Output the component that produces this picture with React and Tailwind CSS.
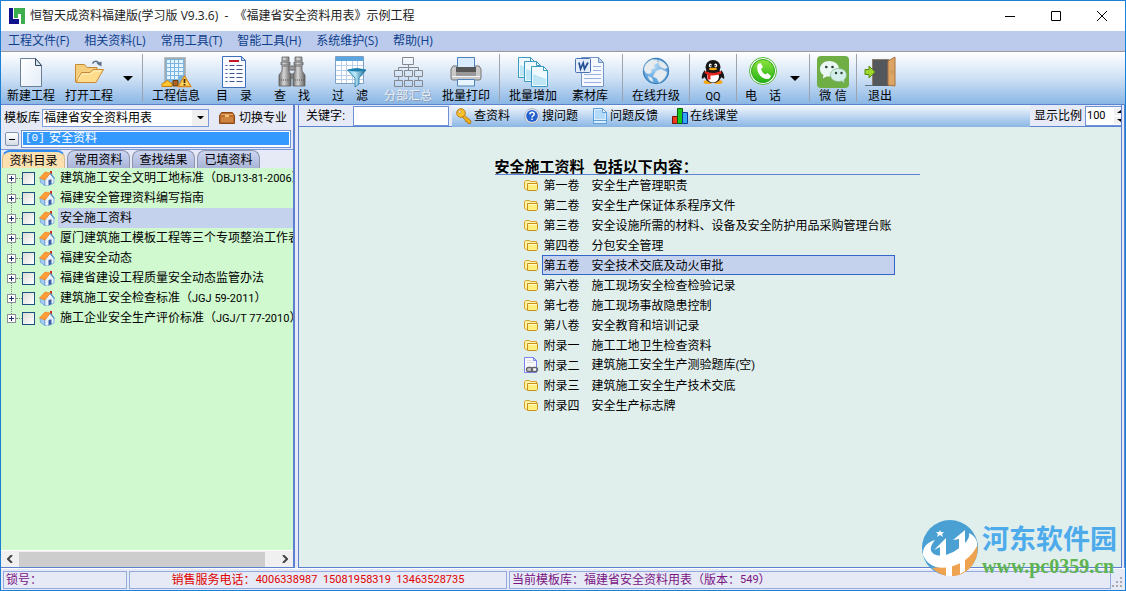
import React from "react";

const UI = "font-['Open_Sans','Noto_Sans_CJK_SC',sans-serif]";
const CJK = "font-['Liberation_Sans','Noto_Sans_CJK_SC',sans-serif]";

/* Sets the Latin runs of a mixed string at about half the width of a Chinese character. */
function Mixed({ children }) {
  return children.split(/([\x20-\x7e]+)/).map((part, i) =>
    i % 2 ? (
      <span key={i} className="font-['Roboto',sans-serif] text-[11px] whitespace-pre">{part}</span>
    ) : (
      part
    )
  );
}

const Svg = ({ children, size = "size-8", box = "0 0 32 32" }) => (
  <svg viewBox={box} className={`${size} shrink-0`} aria-hidden="true">{children}</svg>
);

const NewIcon = () => (
  <Svg>
    <defs><linearGradient id="pg" x1="0" y1="0" x2="1" y2="1"><stop stopColor="#fff" /><stop offset="1" stopColor="#e3ecf8" /></linearGradient></defs>
    <path d="M5.500 2.500h15l6 7v21h-21z" fill="url(#pg)" stroke="#6c7f94" />
    <path d="M20.500 2.500l6 7h-6z" fill="#dbe6f1" stroke="#34495e" />
  </Svg>
);
const OpenIcon = () => (
  <Svg>
    <path d="M2.500 26V8.500h9l2.500 3h10v5" fill="#f6cf7c" stroke="#c68a35" />
    <path d="M3 26.500L8.500 16.500H17l3-3h10.500L23 26.500z" fill="#ffdc8b" stroke="#c68a35" />
    <path d="M5 24l4-6h9l3-3h7" fill="none" stroke="#fff1c2" />
    <path d="M19.500 7.500c2-3.500 5.500-3 7 1.500" fill="none" stroke="#5d7186" strokeWidth="1.600" />
    <path d="M23.500 7.500l5 3V5.500z" fill="#5d7186" />
  </Svg>
);
const InfoIcon = () => (
  <Svg>
    <path d="M5 2h20v27H5z" fill="#7db4de" stroke="#a8a9ab" strokeWidth="1.500" />
    <path d="M7 4h3v3H7zm4 0h3v3h-3zm4 0h3v3h-3zm4 0h4v3h-4zM7 8h3v3H7zm4 0h3v3h-3zm4 0h3v3h-3zm4 0h4v3h-4zM7 12h3v3H7zm4 0h3v3h-3zm4 0h3v3h-3zm4 0h4v3h-4zM7 16h3v3H7zm4 0h3v3h-3zm4 0h3v3h-3zm4 0h4v3h-4zM7 20h3v3H7zm4 0h3v3h-3zm4 0h3v3h-3z" fill="#e2f5ff" />
    <path d="M2 30.500q-1-4 3-4 2-4 5 0 3 0 2 4z" fill="#ffc42e" stroke="#c77e10" />
    <path d="M13 24.500h5V30h-5z" fill="#a96421" stroke="#6f3c0c" />
    <path d="M24.500 20l6.500 10.500H18z" fill="#ffd45c" stroke="#d9891b" strokeWidth="1.300" strokeLinejoin="round" />
    <path d="M24.500 23v4m0 1v1.500" stroke="#3d2a10" strokeWidth="1.800" />
  </Svg>
);
const CatalogIcon = () => (
  <Svg>
    <path d="M4.500.5h19l4 4v27h-23z" fill="#f9fbff" stroke="#3e6fb8" />
    <path d="M23.500.5v4h4z" fill="#c6dcf4" stroke="#3e6fb8" />
    <path d="M11 4h10v2H11z" fill="#c4182c" />
    <path d="M7.500 9.500h2m2 0h5m2 0h6M7.500 13.500h2m2 0h5m2 0h6M7.500 17.500h2m2 0h5m2 0h6M7.500 21.500h2m2 0h5m2 0h6M7.500 25.500h2m2 0h5m2 0h6" stroke="#3d568f" />
  </Svg>
);
const FindIcon = () => (
  <Svg>
    <defs><linearGradient id="bn"><stop stopColor="#6a6a6a" /><stop offset=".4" stopColor="#d6d6d6" /><stop offset="1" stopColor="#606060" /></linearGradient></defs>
    <path d="M12 10h8v4h-8zM13 18h6v4h-6z" fill="#9b9b9b" stroke="#666" />
    <path d="M6 1h7v4H6zM5 6h9v3H5zM6 10h7v5l2 4v11H3V19l3-4z" fill="url(#bn)" stroke="#606060" strokeWidth=".8" />
    <path d="M19 1h7v4h-7zM18 6h9v3h-9zM19 10h7v5l3 4v11H17V19l2-4z" fill="url(#bn)" stroke="#606060" strokeWidth=".8" />
    <path d="M3 24h12M17 24h12" stroke="#555" strokeDasharray="1 1" />
  </Svg>
);
const FilterIcon = () => (
  <Svg>
    <defs><linearGradient id="fn"><stop stopColor="#74c2e6" /><stop offset=".4" stopColor="#bfe9f8" /><stop offset="1" stopColor="#0a5f90" /></linearGradient></defs>
    <path d="M1.500.5h28v27h-28z" fill="#fff" stroke="#7ea0c6" />
    <path d="M2 1h27v4H2z" fill="#5ba4de" />
    <path d="M2 9.500h27M2 14.500h27M2 19.500h27M2 23.500h27M7.500 5v22M12.500 5v22M18.500 5v22M23.500 5v22" stroke="#b8d0ea" />
    <path d="M13.500 14q9.500-3 18.500 0l-7 8v6l-4 3v-9z" fill="url(#fn)" stroke="#1675a5" strokeWidth=".8" />
    <ellipse cx="22.700" cy="14" rx="8.500" ry="1.500" fill="#1b80b0" />
  </Svg>
);
const OrgIcon = () => (
  <Svg>
    <path d="M10.500 1.500h11v7h-11zM2.500 14.500h8v6h-8zM12.500 14.500h8v6h-8zM22.500 14.500h8v6h-8zM2.500 24.500h8v6h-8zM12.500 24.500h8v6h-8zM22.500 24.500h8v6h-8zM16.500 9v5M6.500 14v-2.500h20V14M6.500 21v3M16.500 21v3M26.500 21v3" fill="none" stroke="#84888f" />
  </Svg>
);
const PrintIcon = () => (
  <Svg>
    <path d="M3 10h26l2 3v9q0 2-2 2H3q-2 0-2-2v-9z" fill="#c9c9c9" stroke="#777" />
    <path d="M7.500 1.500h17V12h-17z" fill="#d9ecff" stroke="#4e83b9" />
    <path d="M6 11h20v5H6z" fill="#565656" /><path d="M6 16h20v4H6z" fill="#999" />
    <path d="M2 20.500h28" stroke="#f4f4f4" />
    <path d="M7.500 23.500h17V30h-17z" fill="#e8f5ff" stroke="#4e83b9" />
  </Svg>
);
const BatchIcon = () => (
  <Svg>
    {[[1, 1], [7, 5], [14, 10]].map(([x, y]) => (
      <g key={x} transform={`translate(${x} ${y})`}>
        <path d="M.5.5h12l4 4V20.500H.5z" fill="#eefaff" stroke="#3a9cc3" />
        <path d="M2 8l13 5v6H2z" fill="#bfe6f5" /><path d="M12.500.5v4h4z" fill="#fff" stroke="#3a9cc3" />
      </g>
    ))}
  </Svg>
);
const WordIcon = () => (
  <Svg>
    <path d="M7.500 1.500h17l5 5v24h-22z" fill="#f5f9ff" stroke="#7294c4" />
    <path d="M24.500 1.500v5h5z" fill="#b9cfee" stroke="#7294c4" />
    <path d="M19 10.500h8M19 14.500h8M10 18.500h17M10 22.500h17M10 26.500h17" stroke="#9ab2d6" />
    <rect x="1.500" y="2.500" width="15" height="14" rx="1" fill="#e4eefb" stroke="#4771b0" />
    <path d="M5 6.500l1.500 6.500 2.700-6 1.300 6L14 6.500" fill="none" stroke="#244f96" strokeWidth="1.700" />
  </Svg>
);
const GlobeIcon = () => (
  <Svg>
    <defs><radialGradient id="gl" cx=".4" cy=".3"><stop stopColor="#b5defa" /><stop offset="1" stopColor="#5fa6e0" /></radialGradient></defs>
    <circle cx="16" cy="15" r="12.500" fill="url(#gl)" stroke="#3c81be" strokeWidth="1.300" />
    <path d="M4 14q0-7 8-10.500l5 .5 1 3-4 2 1 3-4 2 1 2-3 2-3-1zM19 4.500q6 1.500 8.500 7l-3 1.500-4-2-2-3zM16 15l5-2 6 3q-1 7-8 10.500l-2-4-4-2zM8 20l4 2 1 4q-4-1-5-6z" fill="#e6ebef" stroke="#c6d3de" strokeWidth=".5" />
  </Svg>
);
const QQIcon = () => (
  <Svg>
    <ellipse cx="11" cy="26" rx="4.500" ry="2" fill="#f7a614" /><ellipse cx="21" cy="26" rx="4.500" ry="2" fill="#f7a614" />
    <path d="M8 14q-4 4-3 9l3-2M24 14q4 4 3 9l-3-2" fill="#161616" />
    <ellipse cx="16" cy="19.500" rx="8.500" ry="7.500" fill="#161616" /><ellipse cx="16" cy="20.500" rx="6" ry="6" fill="#fff" />
    <ellipse cx="16" cy="11" rx="7.500" ry="7" fill="#161616" />
    <ellipse cx="13.300" cy="9.500" rx="1.500" ry="2" fill="#fff" /><ellipse cx="18.700" cy="9.500" rx="1.500" ry="2" fill="#fff" />
    <circle cx="14" cy="9.700" r=".8" /><circle cx="18" cy="9.700" r=".8" />
    <ellipse cx="16" cy="13" rx="4" ry="1.200" fill="#f7a614" />
    <path d="M8 15q8 4 16 0l.5 2.500q-5 2.500-11 2v4h-3v-5l-3-1.500z" fill="#e3231c" />
  </Svg>
);
const PhoneIcon = () => (
  <Svg>
    <defs><linearGradient id="ph" x2="0" y2="1"><stop stopColor="#8ee33e" /><stop offset="1" stopColor="#22b314" /></linearGradient></defs>
    <circle cx="16" cy="15" r="13.500" fill="#fff" stroke="#52ba35" />
    <circle cx="16" cy="15" r="11.500" fill="url(#ph)" stroke="#2ea51c" />
    <path d="M11 8l2.500-1 2.500 4-2 2q1 4 4.500 5.500l2-1.500 3.500 3-1.500 2.500q-5 2-9.500-3-4.500-6-2-11.500z" fill="#fff" />
  </Svg>
);
const WechatIcon = () => (
  <Svg>
    <rect width="32" height="32" rx="4" fill="#6fae45" />
    <path d="M12.500 5C7 5 3 8.500 3 13q0 4 3.500 6l-.8 3.500 4-2Q22 21.500 22 13q-.5-7.500-9.500-8z" fill="#eaf7f4" />
    <path d="M21.500 12.500c-4.700 0-8 2.800-8 6.500s3.400 6.500 8 6.500q1.500 0 3-.5l3 2-.6-3q2.600-2 2.600-5c0-3.700-3.300-6.500-8-6.500z" fill="#d4efeb" stroke="#83ba87" strokeWidth=".8" />
    <g fill="#263c30"><circle cx="9.300" cy="11" r="1.300" /><circle cx="15.500" cy="11" r="1.300" /><circle cx="19" cy="17" r="1.200" /><circle cx="24.500" cy="17" r="1.200" /></g>
  </Svg>
);
const ExitIcon = () => (
  <Svg>
    <path d="M8 3h17v27H8z" fill="#8d7b68" /><path d="M9 4h16v26H9z" fill="#54575b" />
    <path d="M24 5l7-4v29l-7-1z" fill="#dca566" stroke="#a8733c" /><circle cx="28" cy="16" r="1.300" fill="#ffdf82" stroke="#805020" strokeWidth=".5" />
    <path d="M1 13.500h4V10l6 6-6 6v-3.500H1z" fill="#a0d52c" stroke="#548d10" /><path d="M1 29.500h8" stroke="#64727e" />
  </Svg>
);

const HouseIcon = () => (
  <Svg size="size-4" box="0 0 16 16">
    <path d="M1 7.500l5 2.500v5.500L1.500 12.500z" fill="#a5cdf2" stroke="#5b95d2" strokeWidth=".7" />
    <path d="M6 9.500L11 3.500l4 5v4.500l-6.500 3L6 15.500z" fill="#e9f2fc" stroke="#6b9fd8" strokeWidth=".7" />
    <path d="M9.500 10l3-.8v5l-3 1z" fill="#3f62a8" />
    <path d="M11 1h2v4.500l-2-2z" fill="#d52d17" />
    <path d="M.5 8L6 2l5.500 1L6 10z" fill="#ff9c35" stroke="#ee7f1e" strokeWidth=".6" />
    <path d="M11.200 3l4.300 5.500" stroke="#4d86c8" strokeWidth="1.200" />
  </Svg>
);
const FolderIcon = () => (
  <Svg size="w-3.5 h-3" box="0 0 14 12">
    <path d="M.5 9.500v-7l1-1h4l1 1h6v8h-10z" fill="#fff3a3" stroke="#d9a02c" />
    <path d="M3.500 4.500h10v6l-1 1h-9z" fill="#ffef80" stroke="#c8921e" />
    <path d="M4 5.500h9" stroke="#fffbc8" />
  </Svg>
);
const LinkedDocIcon = () => (
  <Svg size="size-4" box="0 0 16 16">
    <path d="M1.500.5h9l3 3v12h-12z" fill="#f8f9ff" stroke="#7d83ee" /><path d="M10.500.5v3h3z" fill="#cfd3fb" stroke="#7d83ee" />
    <path d="M4 3.500h5M4 5.500h7" stroke="#ddd" />
    <rect x="3.500" y="10.500" width="6" height="4" rx="2" fill="#ccc" stroke="#666" strokeWidth="1.300" /><rect x="8.500" y="10.500" width="6" height="4" rx="2" fill="none" stroke="#666" strokeWidth="1.300" />
  </Svg>
);
const KeyIcon = () => (
  <Svg size="size-4" box="0 0 16 16">
    <path d="M7 6l8 7-.5 2.500H12l-1-2H9.500L9 11.500 5 8z" fill="#f0b31c" stroke="#a86b08" strokeWidth=".8" />
    <circle cx="5" cy="5" r="4.300" fill="#f8c22e" stroke="#b37509" strokeWidth=".9" /><circle cx="3.800" cy="3.800" r="1.200" fill="#fff" stroke="#a86b08" strokeWidth=".5" />
  </Svg>
);
const HelpIcon = () => (
  <Svg size="size-4" box="0 0 16 16">
    <circle cx="8" cy="8" r="7.300" fill="#f3f6fa" stroke="#9aa5b4" strokeWidth=".8" /><circle cx="8" cy="8" r="5.900" fill="#2560cc" />
    <path d="M5.800 6.400Q6 4.300 8.100 4.300q2 0 2.100 1.800 0 1.200-1.200 1.800Q8 8.400 8 9.500m0 1v1.600" fill="none" stroke="#fff" strokeWidth="1.500" />
  </Svg>
);
const NoteIcon = () => (
  <Svg size="size-4" box="0 0 16 16">
    <path d="M1.500.5h9l4 4v11h-13z" fill="#dceeff" stroke="#5ba0dc" /><path d="M3 2h7v3h3v6H3z" fill="#b4daf9" /><path d="M10.500.5v4h4z" fill="#fff" stroke="#5ba0dc" /><path d="M1.500 12.500h13" stroke="#5ba0dc" />
  </Svg>
);
const BarsIcon = () => (
  <Svg size="size-4" box="0 0 16 16">
    <path d="M.5 8.500h5v7h-5z" fill="#f23a1d" stroke="#7b0f05" /><path d="M5.500.5h5v15h-5z" fill="#18c91c" stroke="#075c0a" /><path d="M10.500 4.500h5v11h-5z" fill="#31a8f4" stroke="#08369a" />
  </Svg>
);
const ChestIcon = () => (
  <Svg size="size-4" box="0 0 16 16">
    <path d="M.5 5.500l2-3h11l2 3v8H.5z" fill="#b8692c" stroke="#8a4a1a" /><path d="M2 4.500h12" stroke="#e9a767" /><path d="M2 7h12v5H2z" fill="#cd8441" /><path d="M6 5h4v2H6z" fill="#f2c179" />
  </Svg>
);
const Caret = ({ className = "w-2.5" }) => (
  <svg viewBox="0 0 10 5" className={className} aria-hidden="true"><path d="M0 0h10L5 5z" fill="#000" /></svg>
);

const wide = "w-[58px]";
const narrow = "w-[38px]";
const tools = [
  { label: "新建工程", icon: NewIcon, w: wide },
  { label: "打开工程", icon: OpenIcon, w: wide, menu: true },
  null,
  { label: "工程信息", icon: InfoIcon, w: wide },
  { label: "目　录", icon: CatalogIcon, w: wide },
  { label: "查　找", icon: FindIcon, w: wide },
  { label: "过　滤", icon: FilterIcon, w: wide },
  { label: "分部汇总", icon: OrgIcon, w: wide, disabled: true },
  { label: "批量打印", icon: PrintIcon, w: wide },
  null,
  { label: "批量增加", icon: BatchIcon, w: wide },
  { label: "素材库", icon: WordIcon, w: "w-14" },
  null,
  { label: "在线升级", icon: GlobeIcon, w: wide },
  null,
  { label: "QQ", icon: QQIcon, w: narrow },
  null,
  { label: "电　话", icon: PhoneIcon, w: "w-11", menu: true },
  null,
  { label: "微 信", icon: WechatIcon, w: narrow },
  null,
  { label: "退出", icon: ExitIcon, w: narrow },
];

const tree = [
  "建筑施工安全文明工地标准（DBJ13-81-2006）",
  "福建安全管理资料编写指南",
  "安全施工资料",
  "厦门建筑施工模板工程等三个专项整治工作表",
  "福建安全动态",
  "福建省建设工程质量安全动态监管办法",
  "建筑施工安全检查标准（JGJ 59-2011）",
  "施工企业安全生产评价标准（JGJ/T 77-2010）",
];

const volumes = [
  ["第一卷", "安全生产管理职责"],
  ["第二卷", "安全生产保证体系程序文件"],
  ["第三卷", "安全设施所需的材料、设备及安全防护用品采购管理台账"],
  ["第四卷", "分包安全管理"],
  ["第五卷", "安全技术交底及动火审批"],
  ["第六卷", "施工现场安全检查检验记录"],
  ["第七卷", "施工现场事故隐患控制"],
  ["第八卷", "安全教育和培训记录"],
  ["附录一", "施工工地卫生检查资料"],
  ["附录二", "建筑施工安全生产测验题库(空)"],
  ["附录三", "建筑施工安全生产技术交底"],
  ["附录四", "安全生产标志牌"],
];

function TitleBar() {
  return (
    <header className={`flex h-[30px] shrink-0 items-center bg-white pl-2 ${UI}`}>
      <svg viewBox="0 0 16 16" className="size-4" aria-hidden="true">
        <path d="M0 0h4v11h6v5H0z" fill="#11118c" /><path d="M5 0h11v16h-4V6H9v4H5z" fill="#3cae4d" />
      </svg>
      <h1 className="ml-[5px] text-[12px] whitespace-pre text-[#222]">恒智天成资料福建版(学习版 V9.3.6)  -  《福建省安全资料用表》示例工程</h1>
      <div className="ml-auto flex">
        {[["最小化", "M0 5.500h10"], ["最大化", "M.5.5h9v9h-9z"], ["关闭", "M0 0l10 10M10 0L0 10"]].map(([name, d]) => (
          <button key={name} aria-label={name} className="flex h-[30px] w-[46px] items-center justify-center">
            <svg viewBox="0 0 10 10" className="size-2.5"><path d={d} fill="none" stroke="#000" /></svg>
          </button>
        ))}
      </div>
    </header>
  );
}

function Toolbar() {
  return (
    <div role="toolbar" className="flex h-[53px] shrink-0 border-t border-[#999] bg-linear-to-b from-white via-[#cfe1f5] to-[#8ab6e5] pl-px">
      {tools.map((t, i) => {
        if (!t) return <div key={i} className="mx-1 my-0.5 w-px shrink-0 bg-[#9da4ad]" />;
        const Icon = t.icon;
        return (
          <div key={t.label} className="flex shrink-0">
            <button disabled={t.disabled} className={`flex flex-col items-center gap-px pt-1 ${t.w}`}>
              <Icon />
              <span className={`text-[12px] leading-[14px] whitespace-nowrap ${t.disabled ? "text-[#e9edf3] [text-shadow:1px_1px_0_#8da3bd]" : "text-black"}`}>
                {t.label === "QQ" ? <Mixed>QQ</Mixed> : t.label}
              </span>
            </button>
            {t.menu && <button aria-label={`${t.label}菜单`} className="flex w-5 items-center justify-center"><Caret /></button>}
          </div>
        );
      })}
    </div>
  );
}

function LeftPanel() {
  return (
    <aside className="flex w-[294px] shrink-0 flex-col border-r-2 border-b border-[#5c7fd0] bg-[#e6eaf6]">
      <div className="flex h-6 shrink-0 items-center pt-px pl-[3px]">
        <label htmlFor="library" className="w-[38px] whitespace-nowrap">模板库</label>
        <div className="relative">
          <select id="library" className="block h-[18px] w-[167px] appearance-none border border-[#7b9ad8] bg-white pl-px text-[12px] leading-4">
            <option>福建省安全资料用表</option>
          </select>
          <span className="pointer-events-none absolute inset-y-px right-px flex w-4 items-center justify-center bg-[#f0f0f0]"><Caret className="w-[7px]" /></span>
        </div>
        <button className="ml-2.5 flex items-center gap-1 whitespace-nowrap"><ChestIcon />切换专业</button>
      </div>
      <div className="flex h-5 shrink-0 items-center gap-0.5 pr-0.5 pl-1">
        <button aria-label="折叠" className="flex size-3.5 items-center justify-center rounded-xs border border-[#7f93b3] bg-linear-to-b from-white to-[#d6dbe6]">
          <span className="h-px w-1.5 bg-black" />
        </button>
        <button className="flex h-[18px] flex-1 items-start border border-[#6d92d6] bg-white p-px text-left">
          <span className="flex h-[13px] w-full bg-[#3399ff] pl-0.5 leading-[13px] text-white">
            <span className="w-6 font-['Liberation_Mono',monospace] text-[11px]">[0]</span>
            <span>安全资料</span>
          </span>
        </button>
      </div>
      <div role="tablist" className="flex h-[19px] shrink-0 items-end gap-0.5 overflow-hidden border-t border-[#7b95d2] pl-px">
        {["资料目录", "常用资料", "查找结果", "已填资料"].map((name, i) => (
          <button
            key={name}
            role="tab"
            aria-selected={i === 0}
            className={`h-[18px] w-[63px] rounded-t-lg border-x text-[12px] leading-[18px] whitespace-nowrap ${
              i === 0 ? "border-t-2 border-x-[#d9b98a] border-t-[#2f8cf0] bg-[#fde0b0]" : "border-t border-[#8d95ab] bg-linear-to-b from-[#ccd6f2] to-[#a9b3d6]"
            }`}
          >
            {name}
          </button>
        ))}
      </div>
      <div className="min-h-0 flex-1 overflow-hidden bg-[#d0f9cf]">
        <ul className="relative before:absolute before:top-2.5 before:bottom-2.5 before:left-2.5 before:border-l before:border-dotted before:border-[#888]">
          {tree.map((name, i) => (
            <li key={name} className="relative flex h-5 items-center pl-1.5">
              <button aria-label={`展开${name}`} className="flex size-[9px] items-center justify-center border border-[#8a8f9a] bg-white">
                <svg viewBox="0 0 5 5" className="size-[5px]"><path d="M0 2.500h5M2.500 0v5" stroke="#1b2c6b" /></svg>
              </button>
              <span className="w-1.5 border-t border-dotted border-[#888]" />
              <input id={`node-${i}`} type="checkbox" className="size-[13px] shrink-0 appearance-none border border-[#1d5280] bg-linear-to-br from-[#dcdcd7] to-white checked:bg-[#3399ff]" />
              <label htmlFor={`node-${i}`} className="flex h-5 min-w-0 flex-1 items-center gap-[3px] pl-1">
                <HouseIcon />
                <span className={`h-5 flex-1 overflow-hidden pl-0.5 leading-5 whitespace-nowrap ${i === 2 ? "bg-[#c5d2ee]" : ""}`}><Mixed>{name}</Mixed></span>
              </label>
            </li>
          ))}
        </ul>
      </div>
      <div className="flex h-[17px] shrink-0 items-center border-t border-white bg-[#f0f0f0]">
        <button aria-label="向左滚动" className="flex w-[18px] justify-center"><svg viewBox="0 0 6 8" className="h-2 w-1.5"><path d="M5 0L1 4l4 4" fill="none" stroke="#444" strokeWidth="2" /></svg></button>
        <div className="h-[15px] flex-1 pr-3"><div className="h-full bg-[#cdcdcd]" /></div>
        <button aria-label="向右滚动" className="flex w-4 justify-center"><svg viewBox="0 0 6 8" className="h-2 w-1.5"><path d="M1 0l4 4-4 4" fill="none" stroke="#444" strokeWidth="2" /></svg></button>
      </div>
    </aside>
  );
}

function SearchBar() {
  const actions = [["查资料", KeyIcon], ["搜问题", HelpIcon], ["问题反馈", NoteIcon], ["在线课堂", BarsIcon]];
  return (
    <div className="flex h-[22px] shrink-0 items-stretch">
      <div className="flex w-[153px] shrink-0 items-center border-b border-[#5c83d0] bg-[#e6eaf6] pl-[7px]">
        <label htmlFor="keyword" className="w-[47px] whitespace-nowrap">关键字:</label>
        <input id="keyword" className="h-5 w-24 border border-[#6d92d6] bg-white px-1 text-[12px] outline-none" />
      </div>
      <div className="flex min-w-0 flex-1 items-center gap-3.5 overflow-hidden bg-linear-to-b from-[#f4f8fd] to-[#8ab6e5] pl-1">
        {actions.map(([name, Icon]) => (
          <button key={name} className="flex shrink-0 items-center gap-0.5 whitespace-nowrap"><Icon />{name}</button>
        ))}
      </div>
      <div className="flex w-[91px] shrink-0 items-center overflow-hidden border-b border-[#5c83d0] bg-[#e6eaf6] pl-1">
        <label htmlFor="zoom" className="w-[51px] shrink-0 whitespace-nowrap">显示比例</label>
        <div className="flex h-5 flex-1 border border-r-0 border-[#6d92d6] bg-white">
          <input id="zoom" defaultValue="100" className="w-7 shrink-0 bg-white pl-px font-['Roboto',sans-serif] text-[11px] leading-4 outline-none" />
          <div className="flex flex-1 flex-col gap-0.5 overflow-hidden py-px">
            <button aria-label="增大" className="flex flex-1 items-center justify-end bg-[#f0f0f0]"><svg viewBox="0 0 4 3" className="h-[3px] w-1"><path d="M0 3l4-3v3z" /></svg></button>
            <button aria-label="减小" className="flex flex-1 items-center justify-end bg-[#f0f0f0]"><svg viewBox="0 0 4 3" className="h-[3px] w-1"><path d="M0 0l4 3V0z" /></svg></button>
          </div>
        </div>
      </div>
    </div>
  );
}

function Content() {
  return (
    <main className="flex min-w-0 flex-1 flex-col border-x border-b border-[#5c7fd0] bg-[#e1efec]">
      <SearchBar />
      <div className="min-h-0 flex-1 overflow-hidden pt-8 pr-1.5">
        <section className="mx-auto max-w-[425px]">
          <h2 className="border-b border-[#5c83d8] text-[15px] leading-[15px] font-bold whitespace-pre">安全施工资料  包括以下内容：</h2>
          <ul className="pl-7">
            {volumes.map(([no, name], i) => (
              <li key={no}>
                <a href={`#volume-${i + 1}`} className="flex h-5 items-center gap-[3px]">
                  <span className="flex w-4 justify-center">{no === "附录二" ? <LinkedDocIcon /> : <FolderIcon />}</span>
                  <span className={`flex h-5 w-[353px] items-center gap-3 border pt-px pl-px leading-5 whitespace-nowrap ${i === 4 ? "border-[#3366cc] bg-[#c5d2ee]" : "border-transparent"}`}>
                    <span>{no}</span>
                    <span><Mixed>{name}</Mixed></span>
                  </span>
                </a>
              </li>
            ))}
          </ul>
        </section>
      </div>
    </main>
  );
}

function StatusBar() {
  const cell = "flex h-[18px] items-center overflow-hidden border border-[#93a9e0] px-0.5 whitespace-nowrap";
  return (
    <footer className="flex h-[22px] shrink-0 items-center gap-0.5 border-t border-white bg-[#e6eaf6] pr-3.5 pl-0.5">
      <div className={`${cell} w-[124px] text-[#7b1484]`}>锁号：</div>
      <div className={`${cell} w-[378px] justify-center text-[#e00000]`}><Mixed>销售服务电话：4006338987  15081958319  13463528735</Mixed></div>
      <div className={`${cell} flex-1 text-[#7b1484]`}><Mixed>当前模板库：福建省安全资料用表（版本：549）</Mixed></div>
    </footer>
  );
}

function Watermark() {
  return (
    <div className="pointer-events-none absolute right-[5px] bottom-3.5 flex items-center gap-1">
      <svg viewBox="0 0 56 56" className="size-14" aria-hidden="true">
        <circle cx="28" cy="28" r="28" fill="#4aa0d3" />
        <path d="M10 48Q38 46 54 20q5 16-6 28-9 9-21 8-10-1-17-8z" fill="#efa24f" />
        <path d="M1 35Q0 24 13 20 4 31 14 35q14 3 29-12 5-5 4-10 9 4 8 13-8 16-27 21-20 4-27-12z" fill="#fff" />
        <path d="M12 30l12-12v20h-6V27zM31 20l12-10v23h-6V19z" fill="#fff" />
        <path d="M24 40h6v16h-6zM38 36h5v15l-5 3z" fill="#fff" />
        <path d="M18 10l1 2h3l-2 2 1 3-3-2-3 2 1-3-2-2h3z" fill="#fff" />
      </svg>
      <div className="flex w-[138px] flex-col pt-1 whitespace-nowrap">
        <span className="text-[27px] leading-8 font-bold text-[#4dabec]">河东软件园</span>
        <span className="font-['Liberation_Serif',serif] text-[20px] leading-5 font-bold text-[#5db350]">www.pc0359.cn</span>
      </div>
    </div>
  );
}

export default function App() {
  return (
    <div className={`relative flex h-screen flex-col overflow-hidden border border-[#1b7fd4] bg-[#e6eaf6] text-[12px] leading-4 text-black ${CJK}`}>
      <TitleBar />
      <nav className={`flex h-5 shrink-0 items-center gap-[15px] bg-[#bccbec] pl-[7px] text-[#0e3f8c] ${UI}`}>
        {["工程文件(F)", "相关资料(L)", "常用工具(T)", "智能工具(H)", "系统维护(S)", "帮助(H)"].map((m) => (
          <button key={m} className="whitespace-nowrap">{m}</button>
        ))}
      </nav>
      <Toolbar />
      <div className="flex min-h-0 flex-1 gap-[3px] border-t border-r border-[#5c83d0] pr-0.5">
        <LeftPanel />
        <Content />
      </div>
      <StatusBar />
      <svg viewBox="0 0 12 12" className="absolute right-0.5 bottom-0.5 size-3" aria-hidden="true">
        <path d="M9 1h2v2H9zM5 5h2v2H5zM9 5h2v2H9zM1 9h2v2H1zM5 9h2v2H5zM9 9h2v2H9z" fill="#aaa" />
      </svg>
      <Watermark />
    </div>
  );
}
